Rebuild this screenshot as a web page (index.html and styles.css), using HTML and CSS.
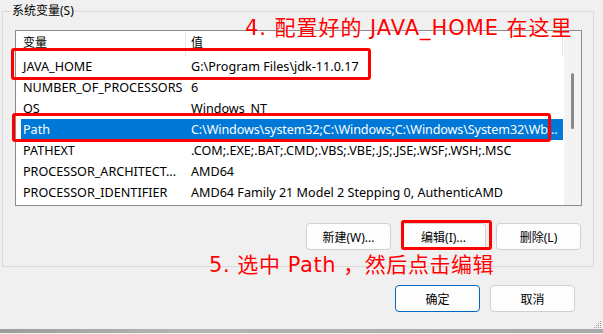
FILE: index.html
```html
<!DOCTYPE html>
<html lang="zh-CN">
<head>
  <meta charset="UTF-8" />
  <title>系统变量</title>
  <link rel="stylesheet" href="styles.css">
</head>
<body>

  <div class="screen">
    <fieldset class="grupo">
      <legend>系统变量(S)</legend>

      <div class="listbox">
        <div class="lista">
          <div class="linha cabecalho"><span>变量</span><span>值</span></div>
          <div class="linha"><span>JAVA_HOME</span><span>G:\Program Files\jdk-11.0.17</span></div>
          <div class="linha"><span>NUMBER_OF_PROCESSORS</span><span>6</span></div>
          <div class="linha"><span>OS</span><span>Windows_NT</span></div>
          <div class="linha selecionada"><span>Path</span><span>C:\Windows\system32;C:\Windows;C:\Windows\System32\Wb...</span></div>
          <div class="linha"><span>PATHEXT</span><span>.COM;.EXE;.BAT;.CMD;.VBS;.VBE;.JS;.JSE;.WSF;.WSH;.MSC</span></div>
          <div class="linha"><span>PROCESSOR_ARCHITECT...</span><span>AMD64</span></div>
          <div class="linha"><span>PROCESSOR_IDENTIFIER</span><span>AMD64 Family 21 Model 2 Stepping 0, AuthenticAMD</span></div>
        </div>
        <div class="scrollbar"><div class="thumb"></div></div>
      </div>

      <div class="botoes">
        <button>新建(W)...</button>
        <button>编辑(I)...</button>
        <button>删除(L)</button>
      </div>
    </fieldset>

    <div class="rodape">
      <button class="padrao">确定</button>
      <button>取消</button>
    </div>

    <div class="borda-janela"></div>

    <!-- anotações por cima da captura -->
    <div class="marca marca-java"></div>
    <div class="marca marca-path"></div>
    <div class="marca marca-editar"></div>
    <div class="nota nota-java">4. 配置好的 JAVA_HOME 在这里</div>
    <div class="nota nota-path">5. 选中 Path ，然后点击编辑</div>

    <svg class="grip" width="8" height="8" viewBox="0 0 8 8">
      <rect x="6" y="0" width="1" height="1" fill="#9a9a9a" />
      <rect x="4" y="2" width="1" height="1" fill="#9a9a9a" />
      <rect x="6" y="2" width="1" height="1" fill="#9a9a9a" />
      <rect x="2" y="4" width="1" height="1" fill="#9a9a9a" />
      <rect x="4" y="4" width="1" height="1" fill="#9a9a9a" />
      <rect x="6" y="4" width="1" height="1" fill="#9a9a9a" />
      <rect x="0" y="6" width="1" height="1" fill="#9a9a9a" />
      <rect x="2" y="6" width="1" height="1" fill="#9a9a9a" />
      <rect x="4" y="6" width="1" height="1" fill="#9a9a9a" />
      <rect x="6" y="6" width="1" height="1" fill="#9a9a9a" />
    </svg>
  </div>

</body>
</html>
```

FILE: styles.css
```css
body {
  margin: 0;
  background-color: #f0f0f0;
  font-family: "Noto Sans", "Noto Sans CJK SC", sans-serif;
  font-size: 12px;
  color: #000;
}

.screen {
  position: relative;
  width: 603px;
  height: 334px;
  overflow: hidden;
  display: flex;
  flex-direction: column;
}

.grupo {
  margin: 3px 9px 0 2px;
  padding: 11px 11px 16px 12px;
  border: 1px solid #dadada;
  min-width: 0;
}

.grupo legend {
  margin-left: -4px;
  padding: 0 1px;
  line-height: 16px;
}

.listbox {
  display: flex;
  height: 176px;
  box-sizing: border-box;
  border: 1px solid #8c8c8c;
  background-color: #fff;
}

.lista {
  flex-grow: 1;
  padding: 0 1px 0 5px;
  min-width: 0;
  font-size: 12.6px;
}

.linha {
  display: grid;
  grid-template-columns: 165px 1fr;
  height: 21px;
  line-height: 21px;
  white-space: nowrap;
}

.linha span {
  overflow: hidden;
  padding-left: 2px;
}

.linha span + span {
  padding-left: 5px;
}

.cabecalho {
  height: 25px;
  line-height: 23px;
  font-size: 12px;
}

.cabecalho span {
  border-right: 1px solid #e5e5e5;
}

.selecionada {
  background-color: #0078d7;
  color: #fff;
}

.selecionada span + span {
  letter-spacing: -0.12px;
}

.scrollbar {
  width: 17px;
  background-color: #f3f3f3;
}

.thumb {
  width: 3px;
  height: 56px;
  margin: 42px auto 0;
  border-radius: 2px;
  background-color: #8a8a8a;
}

.botoes,
.rodape {
  display: flex;
  justify-content: flex-end;
  gap: 10px;
}

.botoes {
  margin-top: 17px;
  padding-right: 1px;
}

.rodape {
  margin-top: 18px;
  padding-right: 28px;
}

button {
  width: 85px;
  height: 27px;
  padding: 0;
  font-family: "Noto Sans", "Noto Sans CJK SC", sans-serif;
  font-size: 12px;
  color: #000;
  background-color: #fdfdfd;
  border: 1px solid #d0d0d0;
  border-radius: 4px;
}

button.padrao {
  border-color: #0067c0;
}

.borda-janela {
  margin-top: 17px;
  height: 4px;
  background: linear-gradient(to right, #9c9c9c, #b4b4b4 30%, #a8a8a8);
}

.marca {
  position: absolute;
  box-sizing: border-box;
  border: 3px solid #ff0000;
  border-radius: 3px;
}

.marca-java {
  left: 11px;
  top: 48px;
  width: 360px;
  height: 32px;
}

.marca-path {
  left: 12px;
  top: 113px;
  width: 539px;
  height: 29px;
}

.marca-editar {
  left: 401px;
  top: 220px;
  width: 91px;
  height: 30px;
}

.nota {
  position: absolute;
  font-family: "DejaVu Sans", "Noto Sans CJK SC", sans-serif;
  font-size: 21px;
  line-height: 24px;
  letter-spacing: 0.95px;
  color: #ff0000;
  white-space: nowrap;
  text-shadow: 0 0 1px #fff;
}

.nota-java {
  left: 245px;
  top: 16px;
}

.nota-path {
  left: 209px;
  top: 253px;
  letter-spacing: 0.55px;
}

.grip {
  position: absolute;
  right: 1px;
  bottom: 5px;
}
```
